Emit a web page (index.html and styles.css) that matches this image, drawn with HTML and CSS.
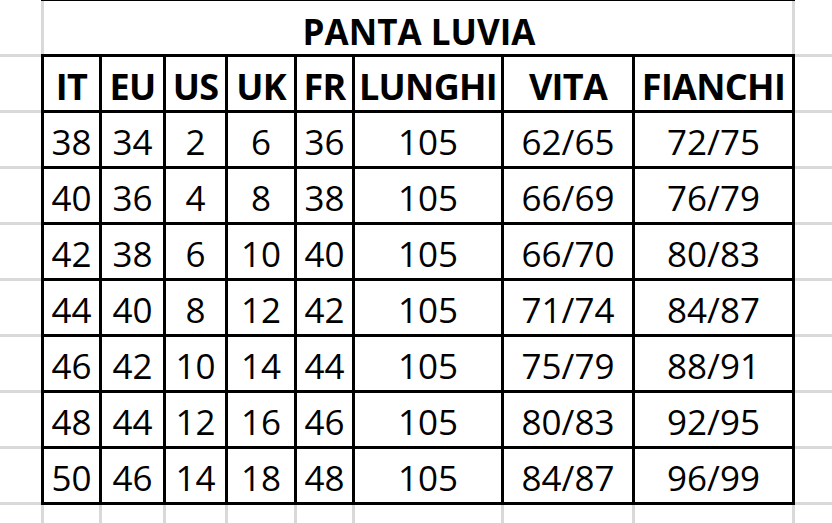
FILE: index.html
```html
<!DOCTYPE html>
<html lang="it">
<head>
<meta charset="utf-8">
<title>PANTA LUVIA</title>
<link rel="stylesheet" href="styles.css">
</head>
<body>
<div class="sheet">
  <div class="gl first"></div>
  <div class="title">PANTA LUVIA</div>
  <div class="gr first"></div>

  <div class="gl"></div>
  <div class="c h">IT</div><div class="c h">EU</div><div class="c h">US</div><div class="c h">UK</div><div class="c h">FR</div><div class="c h">LUNGHI</div><div class="c h">VITA</div><div class="c h last">FIANCHI</div>
  <div class="gr"></div>

  <div class="gl"></div>
  <div class="c">38</div><div class="c">34</div><div class="c">2</div><div class="c">6</div><div class="c">36</div><div class="c">105</div><div class="c">62/65</div><div class="c last">72/75</div>
  <div class="gr"></div>

  <div class="gl"></div>
  <div class="c">40</div><div class="c">36</div><div class="c">4</div><div class="c">8</div><div class="c">38</div><div class="c">105</div><div class="c">66/69</div><div class="c last">76/79</div>
  <div class="gr"></div>

  <div class="gl"></div>
  <div class="c">42</div><div class="c">38</div><div class="c">6</div><div class="c">10</div><div class="c">40</div><div class="c">105</div><div class="c">66/70</div><div class="c last">80/83</div>
  <div class="gr"></div>

  <div class="gl"></div>
  <div class="c">44</div><div class="c">40</div><div class="c">8</div><div class="c">12</div><div class="c">42</div><div class="c">105</div><div class="c">71/74</div><div class="c last">84/87</div>
  <div class="gr"></div>

  <div class="gl"></div>
  <div class="c">46</div><div class="c">42</div><div class="c">10</div><div class="c">14</div><div class="c">44</div><div class="c">105</div><div class="c">75/79</div><div class="c last">88/91</div>
  <div class="gr"></div>

  <div class="gl"></div>
  <div class="c">48</div><div class="c">44</div><div class="c">12</div><div class="c">16</div><div class="c">46</div><div class="c">105</div><div class="c">80/83</div><div class="c last">92/95</div>
  <div class="gr"></div>

  <div class="gl"></div>
  <div class="c">50</div><div class="c">46</div><div class="c">14</div><div class="c">18</div><div class="c">48</div><div class="c">105</div><div class="c">84/87</div><div class="c last">96/99</div>
  <div class="gr"></div>

  <div class="gl"></div>
  <div class="t"></div><div class="t"></div><div class="t"></div><div class="t"></div><div class="t"></div><div class="t"></div><div class="t"></div><div class="t last"></div>
  <div class="gr"></div>
</div>
</body>
</html>
```
FILE: styles.css
```css
html, body {
  margin: 0;
  padding: 0;
  background: #ffffff;
}

.sheet {
  display: grid;
  grid-template-columns: 41px 58px 64px 62px 69px 58px 149px 131px 163px 37px;
  grid-template-rows: 54px repeat(8, 56px) 21px;
  width: 832px;
  height: 523px;
  overflow: hidden;
  font-family: "Open Sans", "Noto Sans", sans-serif;
  color: #000000;
}

.gl,
.gr {
  border-top: 3px solid #d9d9d9;
}

.gl.first,
.gr.first {
  border-top: 0;
}

.title {
  grid-column: 2 / span 8;
  border-top: 1px solid #000000;
  background:
    linear-gradient(#d9d9d9, #d9d9d9) left top / 3px 100% no-repeat,
    linear-gradient(#d9d9d9, #d9d9d9) right top / 3px 100% no-repeat;
  display: flex;
  align-items: flex-end;
  justify-content: center;
  font-weight: 700;
  font-size: 35px;
  line-height: 1;
  padding-bottom: 5px;
  padding-left: 2px;
}

.c {
  border-top: 3px solid #000000;
  border-left: 3px solid #000000;
  display: flex;
  align-items: flex-end;
  justify-content: center;
  font-size: 35px;
  line-height: 1;
  padding-bottom: 7px;
  white-space: nowrap;
}

.c.last {
  border-right: 3px solid #000000;
}

.h {
  font-weight: 700;
  font-size: 36px;
  letter-spacing: -0.7px;
  padding-bottom: 5px;
}

.t {
  border-top: 3px solid #000000;
  background: linear-gradient(#d9d9d9, #d9d9d9) left top / 3px 100% no-repeat;
}

.t.last {
  background:
    linear-gradient(#d9d9d9, #d9d9d9) left top / 3px 100% no-repeat,
    linear-gradient(#d9d9d9, #d9d9d9) right top / 3px 100% no-repeat;
}
```
